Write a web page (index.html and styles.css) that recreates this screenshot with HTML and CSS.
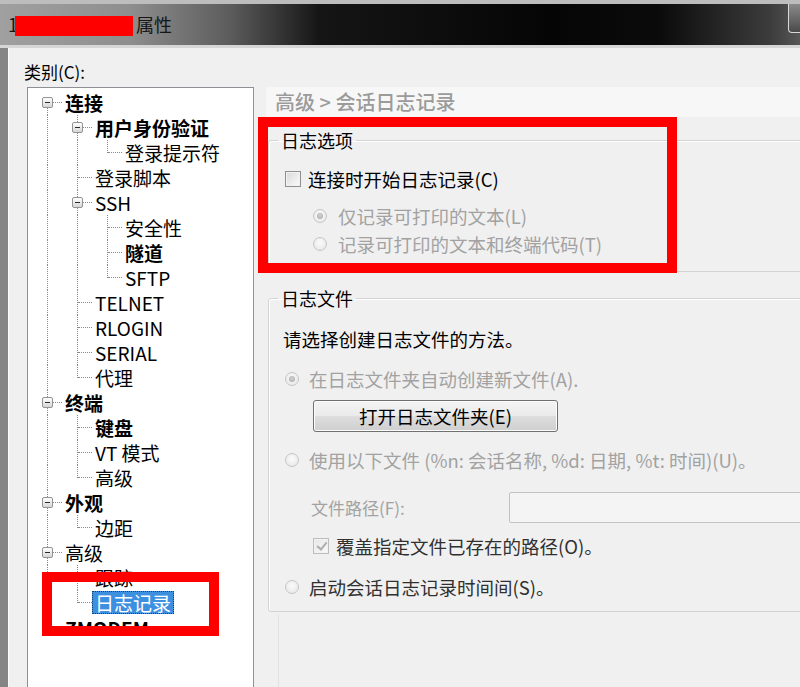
FILE: index.html
```html
<!DOCTYPE html>
<html lang="zh-CN">
<head>
  <meta charset="UTF-8" />
  <meta name="viewport" content="width=device-width, initial-scale=1.0"/>
  <title>属性</title>
  <link rel="stylesheet" href="styles.css">
</head>
<body>
  <div class="titlebar">
    <span class="title">1<span class="redact"></span>属性</span>
    <span class="tb-btn"></span>
  </div>

  <div class="client">
    <label class="cat-label">类别(C):</label>
    <div class="main">
      <div class="tree">
        <div class="row"><span class="c d h"><i class="exp"></i></span><span class="lbl b">连接</span></div>
        <div class="row"><span class="c v"></span><span class="c v h"><i class="exp"></i></span><span class="lbl b">用户身份验证</span></div>
        <div class="row"><span class="c v"></span><span class="c v"></span><span class="c u h"></span><span class="lbl">登录提示符</span></div>
        <div class="row"><span class="c v"></span><span class="c v h"></span><span class="lbl">登录脚本</span></div>
        <div class="row"><span class="c v"></span><span class="c v h"><i class="exp"></i></span><span class="lbl">SSH</span></div>
        <div class="row"><span class="c v"></span><span class="c v"></span><span class="c v h"></span><span class="lbl">安全性</span></div>
        <div class="row"><span class="c v"></span><span class="c v"></span><span class="c v h"></span><span class="lbl b">隧道</span></div>
        <div class="row"><span class="c v"></span><span class="c v"></span><span class="c u h"></span><span class="lbl">SFTP</span></div>
        <div class="row"><span class="c v"></span><span class="c v h"></span><span class="lbl">TELNET</span></div>
        <div class="row"><span class="c v"></span><span class="c v h"></span><span class="lbl">RLOGIN</span></div>
        <div class="row"><span class="c v"></span><span class="c v h"></span><span class="lbl">SERIAL</span></div>
        <div class="row"><span class="c v"></span><span class="c u h"></span><span class="lbl">代理</span></div>
        <div class="row"><span class="c v h"><i class="exp"></i></span><span class="lbl b">终端</span></div>
        <div class="row"><span class="c v"></span><span class="c v h"></span><span class="lbl b">键盘</span></div>
        <div class="row"><span class="c v"></span><span class="c v h"></span><span class="lbl">VT 模式</span></div>
        <div class="row"><span class="c v"></span><span class="c u h"></span><span class="lbl">高级</span></div>
        <div class="row"><span class="c v h"><i class="exp"></i></span><span class="lbl b">外观</span></div>
        <div class="row"><span class="c v"></span><span class="c u h"></span><span class="lbl">边距</span></div>
        <div class="row"><span class="c v h"><i class="exp"></i></span><span class="lbl">高级</span></div>
        <div class="row"><span class="c v"></span><span class="c v h"></span><span class="lbl">跟踪</span></div>
        <div class="row"><span class="c v"></span><span class="c u h"></span><span class="lbl sel">日志记录</span></div>
        <div class="row"><span class="c u h"></span><span class="lbl b">ZMODEM</span></div>
      </div>

      <div class="panel">
        <div class="panel-head">高级 &gt; 会话日志记录</div>

        <fieldset class="group">
          <legend>日志选项</legend>
          <div class="opt first"><span class="chk"></span>连接时开始日志记录(C)</div>
          <div class="opt sub off tall gap10"><span class="radio on"></span>仅记录可打印的文本(L)</div>
          <div class="opt sub off tall"><span class="radio"></span>记录可打印的文本和终端代码(T)</div>
        </fieldset>

        <fieldset class="group g2">
          <legend>日志文件</legend>
          <div class="opt note">请选择创建日志文件的方法。</div>
          <div class="opt off gap14"><span class="radio on"></span>在日志文件夹自动创建新文件(A).</div>
          <button class="btn">打开日志文件夹(E)</button>
          <div class="opt off gap15"><span class="radio"></span>使用以下文件 (%n: 会话名称, %d: 日期, %t: 时间)(U)。</div>
          <div class="path-row">
            <span class="path-label">文件路径(F):</span>
            <span class="path-input"></span>
          </div>
          <div class="opt sub dim gap10"><span class="chk dis on"></span>覆盖指定文件已存在的路径(O)。</div>
          <div class="opt dim gap15"><span class="radio"></span>启动会话日志记录时间间(S)。</div>
        </fieldset>

        <div class="panel-rest"></div>
      </div>
    </div>
  </div>

  <div class="mark mark-opts"></div>
  <div class="mark mark-tree"></div>
</body>
</html>
```

FILE: styles.css
```css
* {
  box-sizing: border-box;
}

html, body {
  margin: 0;
  height: 100%;
  overflow: hidden;
}

body {
  position: relative;
  font-family: "Noto Sans CJK SC", "Microsoft YaHei", sans-serif;
  font-size: 18px;
  color: #000;
  background: #f0f0f0;
}

/* window title bar */
.titlebar {
  height: 48px;
  display: flex;
  align-items: center;
  padding-left: 8px;
  border-top: 4px solid #bdbdbd;
  border-bottom: 3px solid #d6d6d6;
  background: linear-gradient(90deg, #a0a0a0 0, #8e8e8e 130px, #5c5c5c 230px, #151515 320px, #050505 550px, #0b0b0b 660px, #3c3c3c 770px, #575757 800px);
}

.title {
  font-size: 18px;
  line-height: 22px;
  color: #161616;
  white-space: nowrap;
}

/* blacked-out host name (red in the source shot) */
.redact {
  display: inline-block;
  width: 118px;
  height: 20px;
  margin: 0 3px 0 -3px;
  vertical-align: -4px;
  background: #ff0000;
}

.tb-btn {
  margin-left: auto;
  align-self: flex-start;
  width: 12px;
  height: 29px;
  border: 1px solid #d8d8d8;
  border-right: none;
  border-top: none;
  border-radius: 0 0 0 4px;
  background: linear-gradient(#8a8a8a, #4a4a4a);
}

/* dialog client area */
.client {
  height: calc(100% - 48px);
  border-left: 8px solid #858585;
  padding: 13px 0 0 19px;
  box-shadow: inset 1px 0 #fbfbfb;
}

.cat-label {
  display: block;
  margin-left: -3px;
  margin-bottom: 4px;
  height: 22px;
  line-height: 22px;
  font-size: 17px;
}

.main {
  display: flex;
  gap: 12px;
}

/* category tree */
.tree {
  flex: none;
  width: 227px;
  height: 640px;
  padding: 2px 0 0 4px;
  font-size: 19px;
  background: #fff;
  border: 1px solid #8e9096;
}

.row {
  display: flex;
  align-items: center;
  height: 25px;
}

.c {
  position: relative;
  flex: none;
  width: 30px;
  height: 25px;
  display: flex;
  align-items: center;
}

.c.v::before,
.c.u::before,
.c.d::before {
  content: "";
  position: absolute;
  left: 15px;
  border-left: 1px dotted #8a8a8a;
}

.c.v::before { top: 0; bottom: 0; }
.c.u::before { top: 0; height: 13px; }
.c.d::before { top: 12px; bottom: 0; }

.c.h::after {
  content: "";
  position: absolute;
  left: 16px;
  right: 0;
  top: 12px;
  border-top: 1px dotted #8a8a8a;
}

.exp {
  position: relative;
  z-index: 1;
  margin-left: 10px;
  width: 11px;
  height: 11px;
  border: 1px solid #939393;
  border-radius: 2px;
  background: linear-gradient(#ffffff, #d6d6d6);
}

.exp::after {
  content: "";
  position: absolute;
  left: 2px;
  right: 2px;
  top: 4px;
  height: 1px;
  background: #2a2a2a;
}

.lbl {
  padding: 0 3px;
  height: 23px;
  line-height: 23px;
  white-space: nowrap;
}

.lbl.b {
  font-weight: 700;
}

.lbl.sel {
  background: #3d8fe0;
  color: #fff;
  outline: 1px dotted #1c3e66;
  outline-offset: -1px;
}

/* right side page */
.panel {
  flex: none;
  width: 560px;
}

.panel-head {
  height: 30px;
  line-height: 30px;
  padding-left: 9px;
  font-size: 20px;
  font-weight: 500;
  color: #9b9b9b;
  background: #f7f7f7;
}

.group {
  margin: 11px 0 0 2px;
  min-width: 0;
  padding: 0 0 13px 16px;
  font-size: 18.5px;
  border: 1px solid #d3d3d3;
  border-radius: 3px;
  box-shadow: inset 1px 1px #ffffff;
}

.group legend {
  margin-left: -7px;
  padding: 0 3px;
  line-height: 24px;
  font-size: 18px;
}

.g2 {
  margin-top: 14px;
  padding-bottom: 11px;
}

.opt {
  display: flex;
  align-items: center;
  height: 26px;
  white-space: nowrap;
}

.opt.first { margin-top: 14px; }
.opt.tall { height: 28px; }
.opt.sub { padding-left: 28px; }
.opt.note { margin-top: 16px; margin-left: -2px; }
.gap10 { margin-top: 10px; }
.gap14 { margin-top: 14px; }
.gap15 { margin-top: 15px; }

.off { color: #a2a2a2; }
.dim { color: #303030; }

.chk {
  position: relative;
  flex: none;
  width: 16px;
  height: 16px;
  margin-right: 7px;
  border: 1px solid #8e8f8f;
  background: linear-gradient(135deg, #d9d9d9, #fbfbfb);
  box-shadow: inset 0 0 0 1px #f2f2f2;
}

.chk.dis {
  border-color: #bdbdbd;
  background: linear-gradient(135deg, #e6e6e6, #fafafa);
}

.chk.on::after {
  content: "";
  position: absolute;
  left: 5px;
  top: 1px;
  width: 4px;
  height: 8px;
  border-right: 2px solid #aeaeae;
  border-bottom: 2px solid #aeaeae;
  transform: rotate(40deg);
}

.radio {
  position: relative;
  flex: none;
  width: 14px;
  height: 14px;
  margin-right: 10px;
  border-radius: 50%;
  border: 1px solid #c6c6c6;
  background: radial-gradient(circle at 50% 40%, #fbfbfb, #e4e4e4);
}

.radio.on::after {
  content: "";
  position: absolute;
  inset: 3px;
  border-radius: 50%;
  background: radial-gradient(circle at 50% 40%, #d2d2d2, #a8a8a8);
}

.sub .radio {
  margin-right: 11px;
}

.btn {
  display: block;
  margin: 8px 0 0 28px;
  width: 245px;
  height: 32px;
  padding: 0;
  font-family: inherit;
  font-size: 18.5px;
  color: #000;
  border: 1px solid #707070;
  border-radius: 3px;
  background: linear-gradient(#f4f4f4, #ebebeb 48%, #dddddd 52%, #cfcfcf);
  box-shadow: inset 0 0 0 1px #fcfcfc;
}

.path-row {
  display: flex;
  align-items: center;
  margin-top: 19px;
  height: 31px;
}

.path-label {
  width: 227px;
  padding-left: 26px;
  color: #a2a2a2;
  font-size: 17px;
}

.path-input {
  width: 320px;
  height: 31px;
  border: 1px solid #c2c2c2;
  border-radius: 2px;
  background: #f4f4f4;
}

.panel-rest {
  margin: 3px 0 0 12px;
  height: 80px;
  border-left: 1px solid #e1e1e1;
}

/* red annotation frames drawn over the dialog */
.mark {
  position: absolute;
  border: 10px solid #ff0000;
}

.mark-opts {
  left: 258px;
  top: 117px;
  width: 419px;
  height: 156px;
}

.mark-tree {
  left: 42px;
  top: 572px;
  width: 177px;
  height: 64px;
}
```
